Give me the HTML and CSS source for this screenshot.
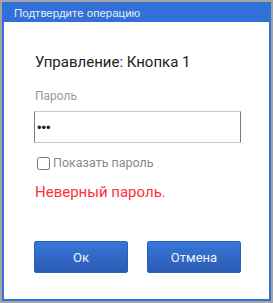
FILE: index.html
```
<!DOCTYPE html>
<html lang="ru">
<head>
    <meta charset="UTF-8">
    <title>Подтвердите операцию</title>
    <link rel="stylesheet" href="styles.css">
</head>
<body>
    <div class="dialog">
        <div class="dialog-header">Подтвердите операцию</div>
        <div class="dialog-body">
            <div class="caption">Управление: Кнопка 1</div>
            <label class="field-label" for="pwd">Пароль</label>
            <input class="field" id="pwd" type="password" value="123">
            <label class="show-pwd">
                <input type="checkbox">
                <span>Показать пароль</span>
            </label>
            <div class="error">Неверный пароль.</div>
            <div class="buttons">
                <button class="btn">Ок</button>
                <button class="btn">Отмена</button>
            </div>
        </div>
    </div>
</body>
</html>
```

FILE: styles.css
```
body {
    margin: 0;
    background-color: #a4a4a4;
    font-family: Roboto, "Liberation Sans", sans-serif;
    height: 303px;
    overflow: hidden;
}

.dialog {
    box-sizing: border-box;
    width: 269px;
    height: 299px;
    margin: 2px;
    background-color: #fff;
    border: 2px solid #3170d6;
    border-top-width: 1px;
}

.dialog-header {
    box-sizing: border-box;
    height: 19px;
    padding: 1px 0 0 10px;
    line-height: 18px;
    background-color: #3170d6;
    color: #e6edf9;
    font-family: "Liberation Sans", Arial, sans-serif;
    font-size: 11.5px;
}

.dialog-body {
    display: flex;
    flex-direction: column;
    align-items: flex-start;
    padding: 30px 0 0 31px;
}

.caption {
    font-size: 15px;
    line-height: 20px;
    color: #222;
}

.field-label {
    margin-top: 16px;
    font-size: 12px;
    line-height: 16px;
    color: #9a9a9a;
}

.field {
    box-sizing: border-box;
    width: 207px;
    height: 32px;
    margin: 7px 0 0 -1px;
    padding: 0 2px;
    border: 1px solid #c8c8c8;
    border-left-color: #7a7a7a;
    border-right-color: #7a7a7a;
    border-radius: 1px;
    font-size: 13px;
    color: #222;
    outline: none;
}

.show-pwd {
    display: flex;
    align-items: center;
    gap: 3px;
    margin-top: 12px;
    font-size: 12.5px;
    line-height: 16px;
    color: #8a8a8a;
}

.show-pwd input {
    width: 13px;
    height: 13px;
    margin: 0 0 0 2px;
}

.error {
    margin-top: 11px;
    font-size: 15px;
    line-height: 20px;
    color: #ff2e3c;
}

.buttons {
    display: flex;
    gap: 19px;
    margin: 39px 0 0 -1px;
}

.btn {
    width: 94px;
    height: 32px;
    border: 1px solid #2b5fb8;
    border-radius: 2px;
    background: linear-gradient(#3777da, #2c5bb2);
    color: #eef3fb;
    font-family: Roboto, "Liberation Sans", sans-serif;
    font-size: 13px;
    cursor: pointer;
}
```
